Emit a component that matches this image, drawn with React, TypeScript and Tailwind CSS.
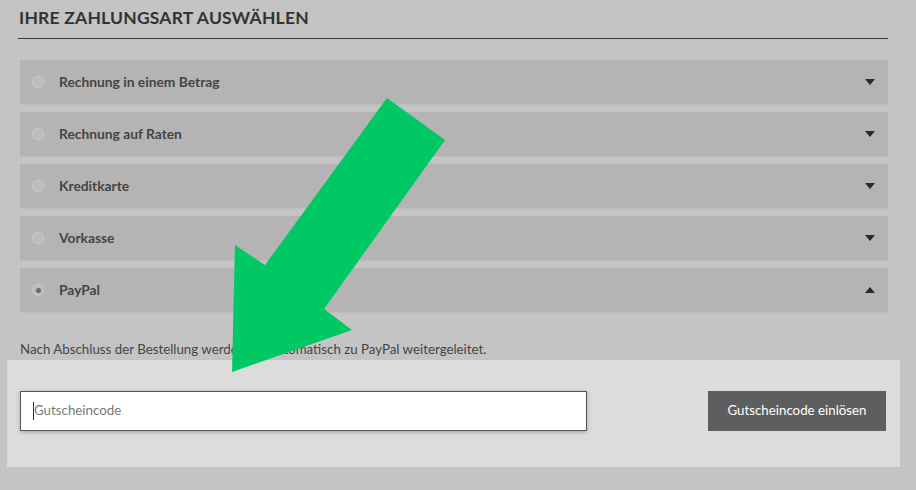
import React from "react";

const methods = [
  { id: 1, label: "Rechnung in einem Betrag", open: false },
  { id: 2, label: "Rechnung auf Raten", open: false },
  { id: 3, label: "Kreditkarte", open: false },
  { id: 4, label: "Vorkasse", open: false },
  { id: 5, label: "PayPal", open: true },
];

function Caret({ up }: { up: boolean }) {
  return (
    <svg width="10" height="6" viewBox="0 0 10 6" className="shrink-0">
      {up ? (
        <polygon points="0,6 10,6 5,0" fill="#2b2b2b" />
      ) : (
        <polygon points="0,0 10,0 5,6" fill="#2b2b2b" />
      )}
    </svg>
  );
}

export default function App() {
  return (
    <div
      className="relative w-[916px] h-[490px] overflow-hidden bg-[#c4c4c4] text-[#444]"
      style={{ fontFamily: "Lato, 'Noto Sans', sans-serif" }}
    >
      <div className="pl-[18px] pt-[7px]">
        {/* heading */}
        <h1 className="pl-[1px] text-[17.5px] font-bold tracking-[0.2px] text-[#333] leading-[22px] pb-[9px] border-b border-[#3a3a3a] w-[870px]">
          IHRE ZAHLUNGSART AUSWÄHLEN
        </h1>

        {/* payment options */}
        <div className="mt-[21px] ml-[2px] flex flex-col gap-[7px] w-[868px]">
          {methods.map((m) => (
            <div
              key={m.id}
              className="h-[45px] bg-[#b4b4b4] border-b border-[#bdbdbd] flex items-center pl-[13px] pr-[13px]"
            >
              <span className="w-[10px] h-[10px] rounded-full bg-[#bdbdbd] shadow-[0_0_1px_1px_#c8c8c8] flex items-center justify-center">
                {m.open && <span className="w-[5px] h-[5px] rounded-full bg-[#6a6a6a]" />}
              </span>
              <span className="ml-[16px] text-[13.8px] font-bold text-[#454545]">{m.label}</span>
              <span className="ml-auto">
                <Caret up={m.open} />
              </span>
            </div>
          ))}
        </div>

        <p className="mt-[28px] ml-[2px] text-[13.3px] text-[#444] leading-[16px]">
          Nach Abschluss der Bestellung werden Sie automatisch zu PayPal weitergeleitet.
        </p>
      </div>

      {/* voucher box */}
      <div className="mt-[3px] ml-[7px] w-[893px] h-[107px] bg-[#dcdcdc] flex items-start justify-between pt-[31px] pl-[13px] pr-[14px]">
        <div className="w-[567px] h-[40px] bg-white border border-[#555] shadow-[0_1px_4px_rgba(0,0,0,0.25)] flex items-center pl-[12px]">
          <span className="w-px h-[18px] bg-[#333]" />
          <span className="text-[13.3px] text-[#777]">Gutscheincode</span>
        </div>
        <button className="w-[178px] h-[40px] bg-[#5e5e5e] text-white text-[13.3px]">
          Gutscheincode einlösen
        </button>
      </div>

      {/* annotation arrow */}
      <svg
        className="absolute left-0 top-0 pointer-events-none"
        width="916"
        height="490"
        viewBox="0 0 916 490"
      >
        <polygon
          points="232,372 235,245 265,265 387,98 445,140 324,309 352,330"
          fill="#00c864"
        />
      </svg>
    </div>
  );
}
